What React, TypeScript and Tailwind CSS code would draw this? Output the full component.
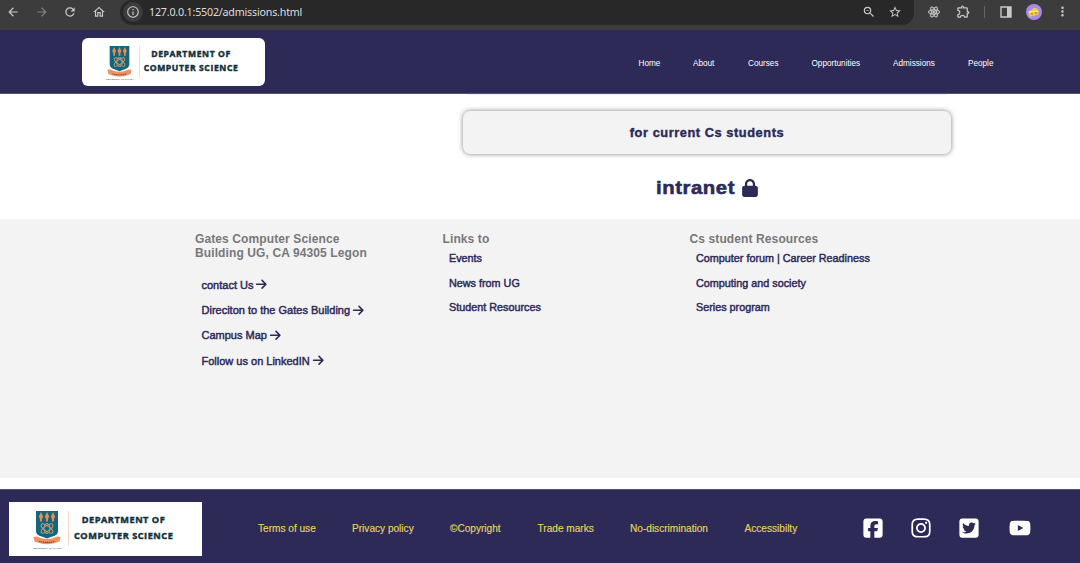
import React from "react";
import { MdArrowBack, MdArrowForward, MdRefresh, MdOutlineHome, MdInfoOutline, MdZoomOut, MdStarBorder, MdOutlineExtension, MdMoreVert } from "react-icons/md";
import { FaLock, FaArrowRight, FaSquareFacebook, FaInstagram, FaSquareTwitter, FaYoutube, FaReact } from "react-icons/fa6";

function Crest({ className }: { className: string }) {
  return (
    <svg viewBox="0 0 28 36" preserveAspectRatio="none" className={className}>
      <path d="M3 0h22v20q0 3-3 4.500l-8 3-8-3Q3 23 3 20z" fill="#12657c" />
      <path d="M8 1l2.200 4.500L9 8v2.500H7V8L5.800 5.500zM14 1l2.200 4.500L15 8v2.500h-2V8l-1.200-2.500zM20 1l2.200 4.500L21 8v2.500h-2V8l-1.200-2.500z" fill="#e58b55" />
      <g fill="none" stroke="#c99b77" strokeWidth="1">
        <ellipse cx="14" cy="17.500" rx="7" ry="2.600" transform="rotate(35 14 17.500)" />
        <ellipse cx="14" cy="17.500" rx="7" ry="2.600" transform="rotate(-35 14 17.500)" />
        <ellipse cx="14" cy="17.500" rx="3" ry="5" />
      </g>
      <path d="M.5 26l3.500-.5q10 5 20 0l3.500.5-1 4.500-3 1q-9.500 3.500-19 0l-3-1z" fill="#ee9263" />
      <path d="M6 30.200q8 2.500 16 0" stroke="#88513c" strokeWidth="1.200" strokeDasharray="1.5 .5" fill="none" />
    </svg>
  );
}

const nav = [
  ["Home", "w-[54.5px]"], ["About", "w-[55px]"], ["Courses", "w-[63.5px]"],
  ["Opportunities", "w-[81.5px]"], ["Admissions", "w-[75px]"], ["People", "w-[40px]"],
];
const legal = [
  ["Terms of use", "w-[94px]"], ["Privacy policy", "w-[98px]"], ["©Copyright", "w-[87.5px]"],
  ["Trade marks", "w-[92.5px]"], ["No-discrimination", "w-[114.5px]"], ["Accessibilty", "w-[60px]"],
];
const contact = ["contact Us", "Direciton to the Gates Building", "Campus Map", "Follow us on LinkedIN"];

function Links({ items }: { items: string[] }) {
  return (
    <ul className="ml-[6.5px] text-[10.8px] text-[#2d2a58] [-webkit-text-stroke:0.45px_#2d2a58]">
      {items.map((t) => <li key={t} className="h-[24.5px] leading-[24px] whitespace-nowrap">{t}</li>)}
    </ul>
  );
}

export default function App() {
  return (
    <div className="flex h-[563px] w-[1080px] flex-col overflow-hidden bg-white font-['Liberation_Sans',sans-serif]">
      <div className="flex h-[30px] shrink-0 items-start bg-[#3c3c3c] text-[#c8c8c8]">
        <div className="flex h-[23px] w-[120px] items-center gap-[14.5px] pl-[6px]">
          <MdArrowBack size={14} /><MdArrowForward size={14} className="text-[#808080]" />
          <MdRefresh size={14} /><MdOutlineHome size={14} />
        </div>
        <div className="flex h-[25px] w-[794px] items-center rounded-b-[12px] rounded-tl-[12px] bg-[#282828] pb-[2px] pl-[3px]">
          <span className="flex size-[20px] items-center justify-center rounded-full bg-[#3c3c3c]"><MdInfoOutline size={14} /></span>
          <span className="ml-[6px] pt-px font-['Noto_Sans',sans-serif] text-[10.7px] leading-none tracking-[-0.2px] text-[#dedede]">127.0.0.1:5502/admissions.html</span>
          <span className="mr-[12px] ml-auto flex gap-[12px]"><MdZoomOut size={14} /><MdStarBorder size={14} /></span>
        </div>
        <div className="flex h-[23px] items-center">
          <FaReact size={12} className="ml-[14px] stroke-current stroke-[24px]" />
          <MdOutlineExtension size={15} className="ml-[16px]" />
          <span className="ml-[13px] h-[12px] w-px bg-[#666]" />
          <svg viewBox="0 0 12 12" className="ml-[15px] size-[12px]"><path d="M1 1h10v10H1z" fill="none" stroke="currentColor" strokeWidth="1.4" /><path d="M7 1h4v10H7z" fill="currentColor" /></svg>
          <svg viewBox="0 0 16 16" className="ml-[14px] size-[16px]"><circle cx="8" cy="8" r="8" fill="#a78bea" /><path d="M2.500 8l5.500-4q4-.5 4.500 3.500v3l-9 2.500z" fill="#f5c842" /><path d="M2.500 8l10-1" stroke="#fff09a" /><circle cx="6" cy="10" r="1" fill="#ca8b22" /><circle cx="10" cy="9" r="1" fill="#ca8b22" /></svg>
          <MdMoreVert size={15} className="ml-[13px]" />
        </div>
      </div>

      <header className="flex h-[64px] shrink-0 items-start border-b border-[#55527b] bg-[#2d2a58] pt-[8px] pl-[82px]">
        <div className="flex h-[48px] w-[183px] rounded-[6px] bg-white pt-[8px] pl-[24.500px] text-[#14313b]">
          <div className="w-[25px]">
            <Crest className="h-[33px] w-[25px]" />
            <p className="-mt-[2px] ml-[-1px] w-[60px] origin-left scale-[0.240] text-[10px] leading-[5px] font-bold whitespace-nowrap text-[#3a7385]">UNIVERSITY OF GHANA</p>
          </div>
          <div className="ml-[7px] h-[32px] w-px bg-[#f8d9cc]" />
          <div className="ml-[4px] w-[95px] pt-[1px] text-center font-['Open_Sans',sans-serif] text-[8.600px] leading-[14px] font-bold tracking-[0.600px] whitespace-nowrap [-webkit-text-stroke:0.45px_#14313b]">
            <p>DEPARTMENT OF</p><p>COMPUTER SCIENCE</p>
          </div>
        </div>
        <nav className="ml-[373.500px] flex pt-[21px] text-[8.2px] leading-[10px] text-white">
          {nav.map(([t, w]) => <a key={t} className={w}>{t}</a>)}
        </nav>
      </header>

      <main className="flex h-[125px] shrink-0 flex-col pl-[463px] text-[#2d2a58]">
        <div className="ml-[4px] h-px w-[480px] bg-[#f0f0f3]" />
        <div className="mt-[16px] flex h-[43px] w-[488px] items-center justify-center rounded-[7px] bg-[#f3f3f3] pt-px text-[12.8px] font-bold tracking-[0.560px] shadow-[0_0_5px_rgba(0,0,0,0.5)] [-webkit-text-stroke:0.4px_#2d2a58]">for current Cs students</div>
        <div className="mt-[23px] flex w-[488px] items-center justify-center gap-[6px] leading-[22px]">
          <span className="w-[79px] origin-left scale-x-[1.100] text-[18.500px] font-bold tracking-[0.500px] [-webkit-text-stroke:0.55px_#2d2a58]">intranet</span>
          <FaLock size={18} />
        </div>
      </main>

      <section className="flex h-[259px] shrink-0 bg-[#f3f3f3] pt-[13px] pl-[195px]">
        <div className="w-[247.500px]">
          <h2 className="text-[12px] leading-[14px] font-bold tracking-[0.110px] text-[#77787b]">Gates Computer Science<br />Building UG, CA 94305 Legon</h2>
          <ul className="mt-[12.600px] ml-[6.5px] text-[11px] text-[#2d2a58] [-webkit-text-stroke:0.45px_#2d2a58]">
            {contact.map((t) => <li key={t} className="flex h-[25.200px] items-center gap-[2px]">{t}<FaArrowRight size={12.5} className="-mt-px" /></li>)}
          </ul>
        </div>
        <div className="w-[247px]">
          <h2 className="text-[12px] leading-[14px] font-bold tracking-[0.110px] text-[#77787b]">Links to</h2>
          <Links items={["Events", "News from UG", "Student Resources"]} />
        </div>
        <div>
          <h2 className="text-[12px] leading-[14px] font-bold tracking-[0.110px] text-[#77787b]">Cs student Resources</h2>
          <Links items={["Computer forum | Career Readiness", "Computing and society", "Series program"]} />
        </div>
      </section>

      <footer className="mt-[11px] flex h-[74px] shrink-0 items-start border-t border-[#55527b] bg-[#2d2a58] pt-[12px] pl-[9px]">
        <div className="flex h-[54px] w-[193px] bg-white pt-[9px] pl-[24px] text-[#14313b]">
          <div className="w-[28px]">
            <Crest className="h-[36px] w-[28px]" />
            <p className="-mt-[1px] w-[60px] origin-left scale-[0.250] text-[10px] leading-[5px] font-bold whitespace-nowrap text-[#3a7385]">UNIVERSITY OF GHANA</p>
          </div>
          <div className="ml-[7px] h-[35px] w-px bg-[#f8d9cc]" />
          <div className="ml-[5px] w-[99px] pt-[1px] text-center font-['Open_Sans',sans-serif] text-[9.200px] leading-[15.500px] font-bold tracking-[0.520px] whitespace-nowrap [-webkit-text-stroke:0.45px_#14313b]">
            <p>DEPARTMENT OF</p><p>COMPUTER SCIENCE</p>
          </div>
        </div>
        <nav className="ml-[56px] flex w-[605px] pt-[20px] text-[10.100px] leading-[13px] whitespace-nowrap text-[#e5d55a] [-webkit-text-stroke:0.15px_#e5d55a]">
          {legal.map(([t, w]) => <a key={t} className={w}>{t}</a>)}
        </nav>
        <div className="-ml-px flex items-center pt-[15px] text-white">
          <FaSquareFacebook size={22} /><FaInstagram size={22} className="ml-[26px]" />
          <FaSquareTwitter size={22} className="ml-[26px]" /><FaYoutube size={22} className="ml-[29px]" />
        </div>
      </footer>
    </div>
  );
}
